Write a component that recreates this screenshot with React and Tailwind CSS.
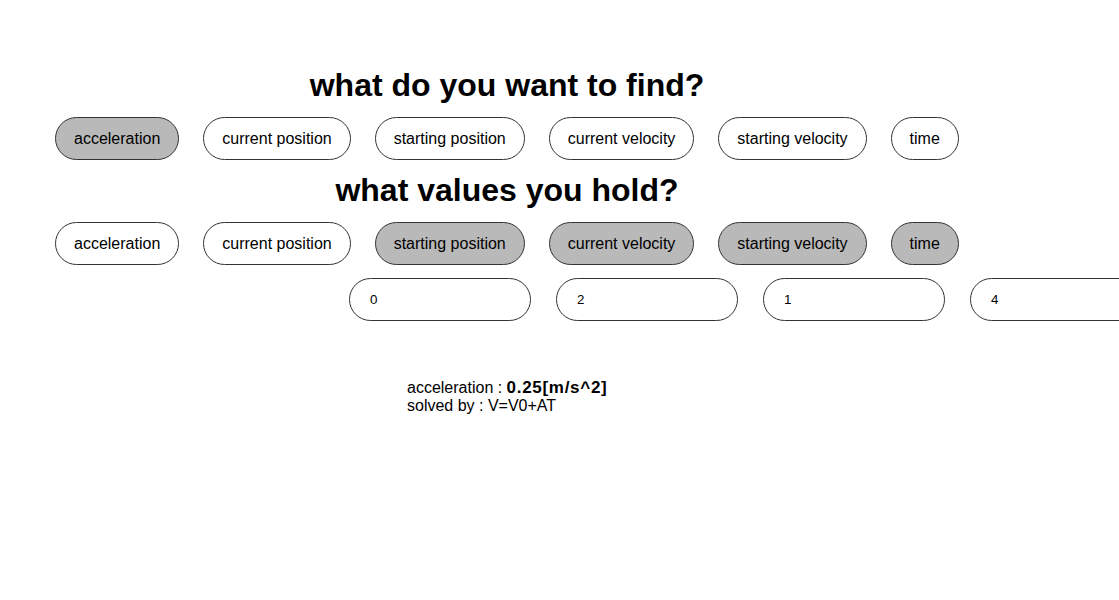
import React, { useState } from 'react';

const OPTIONS = ['acceleration', 'current position', 'starting position', 'current velocity', 'starting velocity', 'time'];

function Pill({ label, active, onClick }) {
  return (
    <button
      onClick={onClick}
      className={`shrink-0 rounded-full border border-[#333] px-[18px] py-[11px] text-[16px] leading-[19px] text-black ${
        active ? 'bg-[#b9b9b9]' : 'bg-white'
      }`}
    >
      {label}
    </button>
  );
}

export default function App() {
  const [find, setFind] = useState('acceleration');
  const [held, setHeld] = useState(['starting position', 'current velocity', 'starting velocity', 'time']);
  const [values] = useState(['0', '2', '1', '4']);

  const toggleHeld = (o) => {
    setHeld((h) => (h.includes(o) ? h.filter((x) => x !== o) : [...h, o]));
  };

  return (
    <div className="min-h-screen w-full overflow-hidden bg-white font-['Liberation_Sans',Arial,sans-serif] text-black">
      <div className="w-[1014px] pt-[67px]">
        <h1 className="text-center text-[32px] font-bold leading-[37px]">what do you want to find?</h1>
        <div className="mt-[13px] flex gap-[24px] pl-[55px]">
          {OPTIONS.map((o) => (
            <Pill key={o} label={o} active={find === o} onClick={() => setFind(o)} />
          ))}
        </div>

        <h1 className="mt-[12px] text-center text-[32px] font-bold leading-[37px]">what values you hold?</h1>
        <div className="mt-[13px] flex gap-[24px] pl-[55px]">
          {OPTIONS.map((o) => (
            <Pill key={o} label={o} active={held.includes(o)} onClick={() => toggleHeld(o)} />
          ))}
        </div>

        <div className="mt-[13px] flex gap-[25px] pl-[349px]">
          {values.map((v, i) => (
            <input
              key={i}
              defaultValue={v}
              className="h-[43px] w-[182px] shrink-0 rounded-full border border-[#333] bg-white px-[20px] text-[13.33px] outline-none"
            />
          ))}
        </div>

        <div className="mt-[58px] pl-[407px] text-[16px] leading-[18px]">
          <div>
            acceleration : <b className="text-[17px] tracking-[0.7px]">0.25[m/s^2]</b>
          </div>
          <div>solved by : V=V0+AT</div>
        </div>
      </div>
    </div>
  );
}
